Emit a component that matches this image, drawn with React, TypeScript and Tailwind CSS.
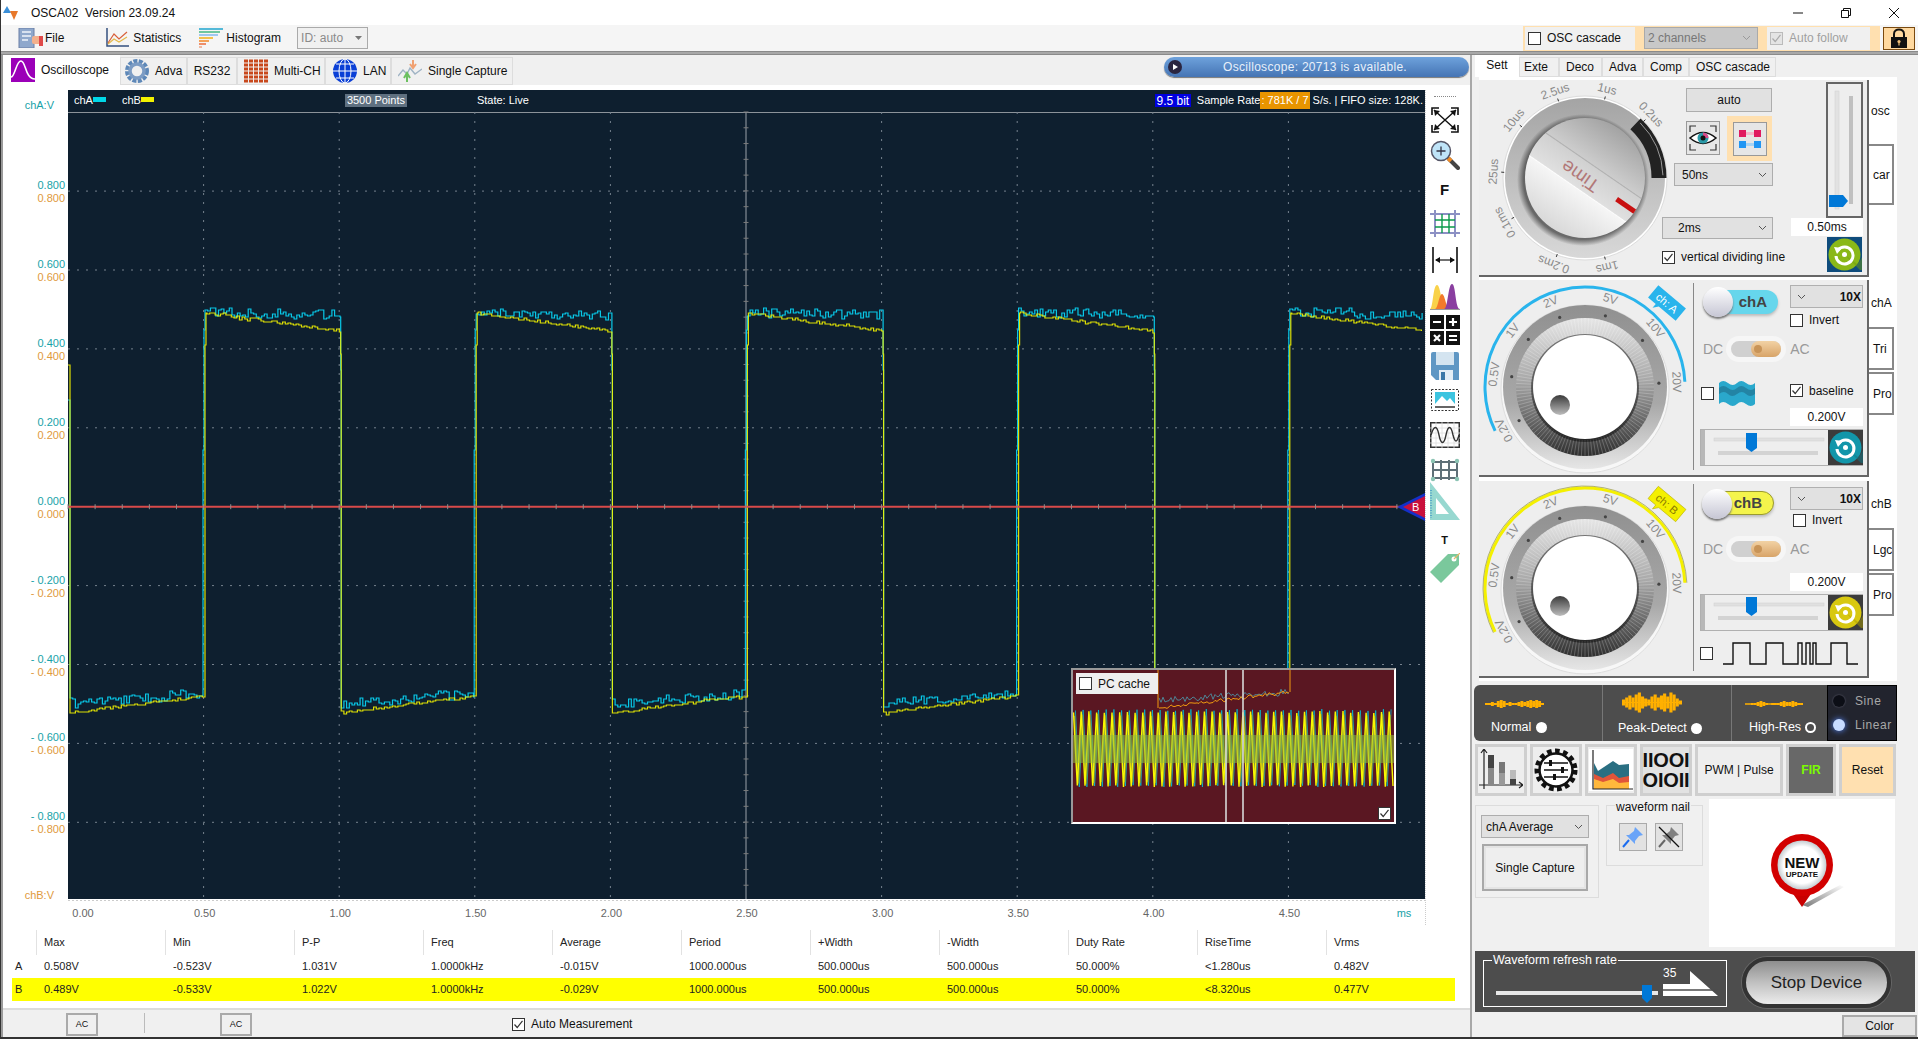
import type { ReactNode } from "react";

// plot geometry, in page pixels
const PLOT_L = 68;
const PLOT_R = 1424;
const PLOT_T = 112;
const PLOT_B = 899;
const ZERO_Y = 506.7;
const DIV_X = 135.6;
const DIV_Y = 78.9;

function rng(seed: number) {
  let a = seed;
  return () => {
    a |= 0;
    a = (a + 0x6d2b79f5) | 0;
    let t = Math.imul(a ^ (a >>> 15), 1 | a);
    t = (t + Math.imul(t ^ (t >>> 7), 61 | t)) ^ t;
    return ((t ^ (t >>> 14)) >>> 0) / 4294967296;
  };
}

type TraceOpt = { seed: number; lowS: number; lowE: number; highS: number; highE: number; noise: number; start: number; edge: number; mid1: number; mid2: number };

// staircase trace: the scope holds each sample until the next one
function trace(o: TraceOpt) {
  const r = rng(o.seed);
  const pts: string[] = [`${PLOT_L},${o.start}`];
  const period = 271.2;
  const step = 2.7;
  const n = () => Math.round((r() - 0.5) * 2 * o.noise);
  let lastY = o.start;
  const hold = (x: number, y: number) => {
    pts.push(`${x.toFixed(1)},${lastY} ${x.toFixed(1)},${y}`);
    lastY = y;
  };
  for (let k = 0; k < 5; k++) {
    const fall = PLOT_L + period * k + 1;
    const rise = fall + 135.6 + o.edge;
    const next = fall + period;
    for (let x = fall + 1; x < rise; x += step) {
      const f = (x - fall) / (rise - fall);
      hold(x, Math.round(o.lowS + (o.lowE - o.lowS) * f) + n());
    }
    hold(rise, o.mid1);
    hold(rise + 1, o.mid1 < 400 ? o.highS : 330);
    for (let x = rise + 2; x < next && x < PLOT_R; x += step) {
      const f = (x - rise) / (next - rise);
      hold(x, Math.round(o.highS + (o.highE - o.highS) * f) + n());
    }
    if (next < PLOT_R) hold(next + 0.5, o.mid2);
  }
  return pts.join(" ");
}

const CYAN_PTS = trace({ seed: 7, lowS: 703, lowE: 694, highS: 312, highE: 315, noise: 5, start: 400, edge: -1.6, mid1: 450, mid2: 370 });
const YELLOW_PTS = trace({ seed: 21, lowS: 713, lowE: 696, highS: 313, highE: 331, noise: 1.6, start: 365, edge: 0.4, mid1: 345, mid2: 354 });

function miniTrace(seed: number, y0: number, y1: number, noise: number) {
  const r = rng(seed);
  const pts: string[] = [];
  for (let x = 1159; x < 1290; x += 2) {
    const f = (x - 1159) / 131;
    pts.push(`${x},${(y0 + (y1 - y0) * f + (r() - 0.5) * noise).toFixed(1)}`);
  }
  return pts.join(" ");
}

function zigzag(y0: number, y1: number, off: number, seed: number) {
  const r = rng(seed);
  const pts: string[] = [];
  let up = true;
  for (let x = 1073 + off; x < 1394; x += 3.85) {
    pts.push(`${x.toFixed(1)},${up ? y0 + r() * 2 : y1 - r() * 2}`);
    up = !up;
  }
  return pts.join(" ");
}

function polar(cx: number, cy: number, r: number, deg: number) {
  const a = ((deg - 90) * Math.PI) / 180;
  return [cx + r * Math.cos(a), cy + r * Math.sin(a)];
}

function arc(cx: number, cy: number, r: number, from: number, to: number) {
  const [x0, y0] = polar(cx, cy, r, from);
  const [x1, y1] = polar(cx, cy, r, to);
  return `M${x0} ${y0} A${r} ${r} 0 ${to - from > 180 ? 1 : 0} 1 ${x1} ${y1}`;
}

function Check({ on, off, className = "" }: { on?: boolean; off?: boolean; className?: string }) {
  return (
    <span className={`flex h-[13px] w-[13px] shrink-0 items-center justify-center border ${off ? "border-[#bbb] bg-[#e4e4e4]" : "border-[#333] bg-white"} ${className}`}>
      {on && (
        <svg width="11" height="11" viewBox="0 0 11 11">
          <path d="M1.5 5.5 L4.2 8.5 L9.5 1.8" fill="none" stroke={off ? "#aaa" : "#333"} strokeWidth="1.2" />
        </svg>
      )}
    </span>
  );
}

function Chevron({ color = "#555" }: { color?: string }) {
  return (
    <svg width="9" height="6" viewBox="0 0 9 6" className="shrink-0">
      <path d="M1 1 L4.5 4.5 L8 1" fill="none" stroke={color} strokeWidth="1" />
    </svg>
  );
}

function TitleBar() {
  return (
    <div className="flex h-[25px] items-center bg-white">
      <svg width="16" height="16" viewBox="0 0 16 16" className="ml-[2px]">
        <path d="M0 8 L4 1 L8 8 Z" fill="#3a8fd8" />
        <path d="M7 6 H15 L11 15 Z" fill="#e8782a" />
      </svg>
      <span className="ml-[12px] whitespace-pre text-[#111]">OSCA02  Version 23.09.24</span>
      <div className="ml-auto flex items-center">
        <svg width="12" height="12" viewBox="0 0 12 12" className="mr-[36px]"><path d="M1 6 H11" stroke="#111" strokeWidth="1" /></svg>
        <svg width="12" height="12" viewBox="0 0 12 12" className="mr-[36px]"><path d="M1.5 3.5 H8.5 V10.5 H1.5 Z M3.5 3.5 V1.5 H10.5 V8.5 H8.5" fill="none" stroke="#111" strokeWidth="1" /></svg>
        <svg width="12" height="12" viewBox="0 0 12 12" className="mr-[18px]"><path d="M1 1 L11 11 M11 1 L1 11" stroke="#111" strokeWidth="1" /></svg>
      </div>
    </div>
  );
}

function MenuBar() {
  return (
    <div className="flex h-[26px] items-center bg-[#f5f5f5]">
      <svg width="26" height="20" viewBox="0 0 26 20" className="ml-[17px]">
        <rect x="1" y="0" width="15" height="20" fill="#8fa8cc" stroke="#6a7fa5" />
        <path d="M4 4 H13 M4 8 H13 M4 12 H10" stroke="#f0f4fa" strokeWidth="1.5" />
        <rect x="14" y="8" width="11" height="8" rx="2" fill="#f3b08c" />
        <rect x="21" y="8" width="4" height="10" fill="#e04a4a" />
      </svg>
      <span className="ml-px">File</span>
      <svg width="24" height="20" viewBox="0 0 24 20" className="ml-[41px]">
        <path d="M2 0 V18 H24" fill="none" stroke="#35507f" strokeWidth="1.5" />
        <path d="M3 15 L9 6 L14 11 L22 4" fill="none" stroke="#d8603a" strokeWidth="1.2" />
        <path d="M3 16 L9 11 L14 14 L22 9" fill="none" stroke="#e3b84a" strokeWidth="1.2" />
      </svg>
      <span className="ml-[4px]">Statistics</span>
      <svg width="24" height="20" viewBox="0 0 24 20" className="ml-[18px]">
        <rect x="0" y="0" width="24" height="2" fill="#54b9d8" />
        <rect x="0" y="3" width="21" height="2" fill="#6fc7a0" />
        <rect x="0" y="6" width="19" height="2" fill="#9fc8f0" />
        <rect x="0" y="9" width="14" height="2" fill="#f2c14e" />
        <rect x="0" y="12" width="10" height="2" fill="#f4a259" />
        <rect x="0" y="15" width="7" height="2" fill="#ee8f6b" />
        <rect x="0" y="18" width="3" height="2" fill="#f0b8a0" />
      </svg>
      <span className="ml-[3px]">Histogram</span>
      <div className="ml-[16px] flex h-[22px] w-[71px] items-center justify-between border border-[#aaa] bg-[#f0f0f0] pl-[3px] pr-[5px] text-[#8a8a8a]">
        <span>ID: auto</span>
        <svg width="7" height="4" viewBox="0 0 7 4"><path d="M0 0 H7 L3.5 4 Z" fill="#777" /></svg>
      </div>
      <div className="ml-auto flex h-[25px] w-[357px] items-center bg-[#ffe0b0] pl-[2px]">
        <div className="flex h-[23px] w-[110px] items-center bg-[#f0f0f0] pl-[3px]">
          <Check />
          <span className="ml-[6px]">OSC cascade</span>
        </div>
        <div className="ml-[9px] flex h-[22px] w-[114px] items-center justify-between border border-[#aaa] bg-[#c8c8c8] pl-[3px] pr-[6px] text-[#777]">
          <span>2 channels</span>
          <Chevron color="#999" />
        </div>
        <div className="ml-[9px] flex h-[23px] w-[103px] items-center bg-[#f0f0f0] pl-[3px] text-[#a0a0a0]">
          <Check on off />
          <span className="ml-[6px]">Auto follow</span>
        </div>
      </div>
      <div className="ml-[3px] mr-[3px] flex h-[23px] w-[32px] items-center justify-center border border-[#7a4a10] bg-[#ffd9a0]">
        <svg width="20" height="20" viewBox="0 0 20 20">
          <path d="M5 10 V6 C5 0 15 0 15 6 V10" fill="none" stroke="#111" strokeWidth="2" />
          <rect x="2" y="9" width="16" height="11" fill="#111" />
          <circle cx="10" cy="13.5" r="1.6" fill="#f4c27a" />
          <rect x="9.4" y="14" width="1.2" height="3.5" fill="#f4c27a" />
        </svg>
      </div>
    </div>
  );
}

function TabIcon({ children, w = 24 }: { children: ReactNode; w?: number }) {
  return (
    <svg width={w} height="24" viewBox={`0 0 ${w} 24`} className="shrink-0">
      {children}
    </svg>
  );
}

function ScopeTabs() {
  const tab = "mt-[2px] flex h-[28px] items-center border border-[#ddd] bg-[#f0f0f0]";
  return (
    <div className="flex h-[30px] items-start">
      <div className="flex h-[30px] w-[117px] items-center bg-white pl-[8px]">
        <TabIcon>
          <rect width="24" height="24" fill="#9b00b8" />
          <path d="M0 19 C4 19 5 3 10 3 C15 3 14 21 24 21" fill="none" stroke="#fff" strokeWidth="1.6" />
        </TabIcon>
        <span className="ml-[6px]">Oscilloscope</span>
      </div>
      <div className={`${tab} w-[67px] pl-[4px]`}>
        <TabIcon>
          <circle cx="12" cy="12" r="10" fill="none" stroke="#5e88b8" strokeWidth="4" strokeDasharray="4 1.4" />
          <circle cx="12" cy="12" r="7" fill="none" stroke="#7c9cc4" strokeWidth="3.5" />
        </TabIcon>
        <span className="ml-[6px]">Adva</span>
      </div>
      <div className={`${tab} w-[50px] justify-center`}>RS232</div>
      <div className={`${tab} w-[88px] pl-[6px]`}>
        <TabIcon>
          {Array.from({ length: 30 }, (_, i) => (
            <rect key={i} x={(i % 5) * 5} y={Math.floor(i / 5) * 4 + 0.5} width="4" height="3" fill="#c8481c" />
          ))}
        </TabIcon>
        <span className="ml-[6px]">Multi-CH</span>
      </div>
      <div className={`${tab} w-[66px] pl-[7px]`}>
        <TabIcon>
          <circle cx="12" cy="12" r="12" fill="#0a3fd6" />
          <path d="M0 12 H24 M12 0 V24 M3 5 H21 M3 19 H21" stroke="#fff" strokeWidth="1" />
          <ellipse cx="12" cy="12" rx="6" ry="12" fill="none" stroke="#fff" strokeWidth="1" />
        </TabIcon>
        <span className="ml-[6px]">LAN</span>
      </div>
      <div className={`${tab} w-[122px] pl-[6px]`}>
        <TabIcon>
          <path d="M0 17 L5 11 L9 15 L12 9 L17 15 L24 10" fill="none" stroke="#9fb3c4" strokeWidth="1.4" />
          <path d="M15 1 V8 M12 5 L15 9 L18 5" fill="none" stroke="#f0a070" strokeWidth="2" />
          <path d="M9 23 V16 M6 19 L9 14 L12 19" fill="none" stroke="#6cc060" strokeWidth="2" />
        </TabIcon>
        <span className="ml-[6px]">Single Capture</span>
      </div>
      <div className="ml-auto mr-[1px] mt-[2px] flex h-[20px] w-[305px] items-center rounded-full bg-linear-to-b from-[#6ea2dc] to-[#4574b4] pl-[4px] text-[#e8f0fa] shadow-[0_1px_1px_#777]">
        <span className="flex h-[14px] w-[14px] items-center justify-center rounded-full bg-[#2a2540]">
          <svg width="6" height="6" viewBox="0 0 6 6"><path d="M1 0 L6 3 L1 6 Z" fill="#fff" /></svg>
        </span>
        <span className="ml-[41px] tracking-[0.3px]">Oscilloscope: 20713 is available.</span>
      </div>
    </div>
  );
}

const Y_LABELS = ["0.800", "0.600", "0.400", "0.200", "0.000", "- 0.200", "- 0.400", "- 0.600", "- 0.800"];
const X_LABELS = ["0.00", "0.50", "1.00", "1.50", "2.00", "2.50", "3.00", "3.50", "4.00", "4.50"];

function PlotSvg() {
  const vLines = Array.from({ length: 9 }, (_, i) => PLOT_L + (i + 1) * DIV_X);
  const hLines = Array.from({ length: 9 }, (_, i) => ZERO_Y + (i - 4) * DIV_Y);
  const ticks = Array.from({ length: 50 }, (_, i) => PLOT_L + i * 27.12);
  const vTicks = Array.from({ length: 50 }, (_, i) => PLOT_T + i * (DIV_Y / 5));
  const midX = PLOT_L + 5 * DIV_X;
  return (
    <svg width="1422" height="835" viewBox="3 90 1422 835" className="block">
      <defs>
        <clipPath id="plotClip"><rect x={PLOT_L} y={PLOT_T} width={PLOT_R - PLOT_L} height={PLOT_B - PLOT_T} /></clipPath>
      </defs>
      <rect x={PLOT_L} y="90" width={PLOT_R + 1 - PLOT_L} height={PLOT_B - 90} fill="#0e1f2f" />
      <path d={`M${PLOT_L} ${PLOT_T + 0.5} H${PLOT_R + 1}`} stroke="#8c939a" />
      {hLines.filter((_, i) => i !== 4).map((y) => (
        <path key={y} d={`M${PLOT_L} ${y} H${PLOT_R}`} stroke="#76828e" strokeDasharray="2 7" />
      ))}
      {vLines.filter((_, i) => i !== 4).map((x) => (
        <path key={x} d={`M${x} ${PLOT_T} V${PLOT_B}`} stroke="#76828e" strokeDasharray="2 7" />
      ))}
      <path d={`M${midX} ${PLOT_T} V${PLOT_B}`} stroke="#9aa2aa" />
      {vTicks.map((y) => (
        <path key={y} d={`M${midX - 2.5} ${y} H${midX + 2.5}`} stroke="#7c7c7c" />
      ))}
      <g clipPath="url(#plotClip)">
        <polyline points={CYAN_PTS} fill="none" stroke="#08c8e8" strokeWidth="1.2" />
        <polyline points={YELLOW_PTS} fill="none" stroke="#f4f400" strokeWidth="1.2" opacity="0.9" />
      </g>
      <path d={`M${PLOT_L} ${ZERO_Y} H1410`} stroke="#d84a4a" strokeWidth="2" />
      {ticks.map((x) => (
        <path key={x} d={`M${x} ${ZERO_Y - 2.5} V${ZERO_Y + 2.5}`} stroke="#8d8d8d" />
      ))}
      <polygon points="1397,507 1425,493 1425,521" fill="#1430c8" />
      <polygon points="1403,507 1425,496 1425,518" fill="#c8103c" />
      <text x="1412" y="511" fontSize="11" fill="#fff">B</text>

      <text x="54" y="109" fontSize="11" fill="#17a2a8" textAnchor="end">chA:V</text>
      <text x="54" y="899" fontSize="11" fill="#e09a3c" textAnchor="end">chB:V</text>
      {Y_LABELS.map((t, i) => (
        <g key={t} fontSize="11" textAnchor="end">
          <text x="65" y={hLines[i] - 2} fill="#17a2a8">{t}</text>
          <text x="65" y={hLines[i] + 11} fill="#e09a3c">{t}</text>
        </g>
      ))}
      <path d={`M${PLOT_L} 900.5 H${PLOT_R + 1}`} stroke="#ccc" strokeDasharray="2 2" />
      {X_LABELS.map((t, i) => (
        <text key={t} x={i === 0 ? 83 : PLOT_L + i * DIV_X + 1} y="917" fontSize="11" fill="#666" textAnchor="middle">{t}</text>
      ))}
      <text x="1404" y="917" fontSize="11" fill="#17a2a8" textAnchor="middle">ms</text>
    </svg>
  );
}

function PlotHeader() {
  return (
    <div className="absolute left-[65px] top-0 flex h-[21px] w-[1357px] items-center text-[11px] text-white">
      <span className="ml-[6px]">chA</span>
      <span className="mb-[3px] h-[5px] w-[13px] bg-[#00d8e8]" />
      <span className="ml-[16px]">chB</span>
      <span className="mb-[3px] h-[5px] w-[13px] bg-[#f2f200]" />
      <span className="ml-[191px] flex h-[13px] w-[62px] items-center justify-center bg-[#5f7080]">3500 Points</span>
      <span className="ml-[70px]">State: Live</span>
      <span className="ml-auto flex h-[13px] w-[36px] items-center justify-center bg-[#0000e0] text-[12px]">9.5 bit</span>
      <span className="ml-[6px]">Sample Rate</span>
      <span className="bg-[#e89400] px-px">: 781K / 7</span>
      <span className="ml-[3px] mr-[2px] whitespace-pre">S/s. | FIFO size: 128K.</span>
    </div>
  );
}

function PcCache() {
  return (
    <div className="absolute left-[1068px] top-[578px] h-[156px] w-[325px] border-2 border-white border-l-[#999] border-t-[#999] bg-[#5a1722]">
      <svg width="321" height="152" viewBox="1073 670 321 152" className="absolute left-0 top-0">
        <polyline points={zigzag(709, 787, 2.4, 3)} fill="none" stroke="#00bcd4" strokeWidth="0.8" />
        <polyline points={zigzag(714, 784, 1.5, 4)} fill="none" stroke="#7c8a3e" strokeWidth="1.8" />
        <polyline points={zigzag(711, 787, 0.5, 5)} fill="none" stroke="#f8f800" strokeWidth="1.4" />
        <rect x="1073" y="735" width="321" height="28" fill="#93bb3c" opacity="0.55" />
        <polyline points={miniTrace(9, 700, 692, 7)} fill="none" stroke="#4f8394" strokeWidth="1" />
        <polyline points={miniTrace(11, 708, 692, 4)} fill="none" stroke="#f09a10" strokeWidth="1" />
        <path d="M1158 668 V708 M1290 670 V692" stroke="#f09a10" strokeWidth="1" />
        <path d="M1226 670 V822 M1243 670 V822" stroke="#d8d8d8" strokeWidth="1.6" />
      </svg>
      <div className="absolute left-[3px] top-[3px] flex h-[21px] w-[82px] items-center bg-[#eeeeee] pl-[3px]">
        <Check />
        <span className="ml-[6px]">PC cache</span>
      </div>
      <Check on className="absolute bottom-[2px] right-[3px]" />
    </div>
  );
}

function ToolStrip() {
  return (
    <div className="flex w-[45px] flex-col items-center border-l border-dotted border-[#ccc] pr-[7px]">
      <div className="mt-[6px] h-px w-[22px] border-t border-dotted border-[#888]" />
      <svg width="28" height="26" viewBox="0 0 28 26" className="mt-[10px]">
        <path d="M3 3 L25 23 M25 3 L3 23" stroke="#111" strokeWidth="1.4" />
        <path d="M1 8 V1 H8 M20 1 H27 V8 M1 18 V25 H8 M20 25 H27 V18" fill="none" stroke="#111" strokeWidth="1.6" />
        <path d="M3 3 L9 4 L4 9 Z M25 3 L19 4 L24 9 Z M3 23 L9 22 L4 17 Z M25 23 L19 22 L24 17 Z" fill="#111" />
      </svg>
      <svg width="30" height="30" viewBox="0 0 30 30" className="mt-[7px]">
        <path d="M19 19 L28 28" stroke="#444" strokeWidth="4" strokeLinecap="round" />
        <path d="M18 18 L21 21" stroke="#f08a24" strokeWidth="4" />
        <circle cx="11" cy="11" r="9.5" fill="#bfe4f8" stroke="#556" strokeWidth="1.5" />
        <path d="M6.5 11 H15.5 M11 6.5 V15.5" stroke="#334" strokeWidth="1.3" />
      </svg>
      <span className="mt-[13px] text-[15px] font-bold leading-[14px]">F</span>
      <svg width="30" height="27" viewBox="0 0 30 27" className="mt-[13px]">
        <path d="M0 4 H30 M0 23 H30 M5 0 V27 M25 0 V27" stroke="#8c90c4" strokeWidth="2" />
        <path d="M5 10 H25 M5 17 H25 M12 4 V23 M19 4 V23" stroke="#0a9a4a" strokeWidth="1.4" />
      </svg>
      <svg width="28" height="26" viewBox="0 0 28 26" className="mt-[10px]">
        <path d="M2 0 V26 M26 0 V26" stroke="#111" strokeWidth="1.6" />
        <path d="M5 13 H23" stroke="#111" strokeWidth="1.2" />
        <path d="M4 13 L9 10 V16 Z M24 13 L19 10 V16 Z" fill="#111" />
      </svg>
      <svg width="30" height="30" viewBox="0 0 30 30" className="mt-[7px]">
        <path d="M0 29 C3 29 3 5 7 5 C11 5 11 29 17 29 Z" fill="#f9d24a" />
        <path d="M5 29 C8 29 9 14 12 14 C15 14 16 29 20 29 Z" fill="#f27a2a" />
        <path d="M14 29 C18 29 18 4 22 4 C26 4 25 29 30 29 Z" fill="#8a3fa0" />
        <path d="M0 29.5 H30" stroke="#999" />
      </svg>
      <svg width="30" height="30" viewBox="0 0 30 30" className="mt-[5px]">
        <rect x="0" y="0" width="14" height="14" fill="#111" />
        <rect x="16" y="0" width="14" height="14" fill="#111" />
        <rect x="0" y="16" width="14" height="14" fill="#111" />
        <rect x="16" y="16" width="14" height="14" fill="#111" />
        <path d="M3 7 H11 M19 7 H27 M23 3 V11 M4 20 L10 26 M10 20 L4 26 M19 21 H27 M19 25 H27" stroke="#fff" strokeWidth="2.2" />
      </svg>
      <svg width="28" height="28" viewBox="0 0 28 28" className="mt-[7px]">
        <path d="M2 0 H26 Q28 0 28 2 V28 H5 L0 23 V2 Q0 0 2 0 Z" fill="#5f97c4" />
        <rect x="5" y="0" width="18" height="13" fill="#d4e4f0" />
        <rect x="8" y="18" width="14" height="10" fill="#e4eef6" />
        <rect x="10" y="20" width="4" height="8" fill="#3c78a8" />
      </svg>
      <svg width="30" height="24" viewBox="0 0 30 24" className="mt-[8px]">
        <rect x="1.5" y="1.5" width="27" height="21" fill="#fff" stroke="#333" strokeWidth="1" strokeDasharray="2 1.5" />
        <rect x="5" y="4" width="20" height="12" fill="#3cc4e0" />
        <path d="M5 16 L12 8 L17 13 L20 10 L25 16 Z" fill="#fff" />
        <rect x="5" y="18" width="20" height="2" fill="#666" />
      </svg>
      <svg width="30" height="26" viewBox="0 0 30 26" className="mt-[10px]">
        <rect x="0.75" y="0.75" width="28.5" height="24.5" fill="#fff" stroke="#333" strokeWidth="1.5" />
        <path d="M0 6 H30 M0 11 H30 M0 16 H30 M0 21 H30 M6 0 V26 M12 0 V26 M18 0 V26 M24 0 V26" stroke="#ddd" strokeWidth="0.8" />
        <path d="M1 13 C4 3 7 3 9 13 C11 23 14 23 16 13 C18 3 21 3 23 13 C25 21 27 21 29 13" fill="none" stroke="#333" strokeWidth="1.4" />
      </svg>
      <svg width="30" height="24" viewBox="0 0 30 24" className="mt-[10px]">
        <path d="M2 4 H28 M2 12 H28 M2 20 H28 M3 2 V22 M11 2 V22 M19 2 V22 M27 2 V22" stroke="#5f7078" strokeWidth="2" />
        <g fill="#8cc4b4">
          <circle cx="3" cy="3" r="2.2" /><circle cx="27" cy="3" r="2.2" /><circle cx="3" cy="21" r="2.2" /><circle cx="27" cy="21" r="2.2" />
        </g>
      </svg>
      <svg width="30" height="38" viewBox="0 0 30 38">
        <path fillRule="evenodd" d="M0 0 L30 38 H0 Z M6 16 V32 H19 Z" fill="#97d8d0" />
        <path d="M1 8 V36" stroke="#58a8c8" strokeWidth="2" strokeDasharray="1 1.5" />
      </svg>
      <span className="mt-[13px] text-[11px] font-bold leading-[14px]">T</span>
      <svg width="30" height="30" viewBox="0 0 30 30" className="mt-[6px]">
        <path d="M0 19 L18 1 H29 V12 L11 30 Z" fill="#7ac89c" />
        <circle cx="24" cy="6" r="2.5" fill="#fff" />
        <path d="M24 6 L30 0" stroke="#e8b86a" strokeWidth="1.2" />
      </svg>
    </div>
  );
}

const MEASURE_HEAD = ["Max", "Min", "P-P", "Freq", "Average", "Period", "+Width", "-Width", "Duty Rate", "RiseTime", "Vrms"];
const ROW_A = ["0.508V", "-0.523V", "1.031V", "1.0000kHz", "-0.015V", "1000.000us", "500.000us", "500.000us", "50.000%", "<1.280us", "0.482V"];
const ROW_B = ["0.489V", "-0.533V", "1.022V", "1.0000kHz", "-0.029V", "1000.000us", "500.000us", "500.000us", "50.000%", "<8.320us", "0.477V"];

function MeasureTable() {
  return (
    <div className="ml-[9px] mt-[5px] grid w-[1444px] grid-cols-[24px_repeat(11,129px)] text-[11px] text-[#222]">
      <div className="h-[25px]" />
      {MEASURE_HEAD.map((h) => (
        <div key={h} className="flex h-[25px] items-center border-l border-[#e2e2e2] pl-[7px] last:border-r">{h}</div>
      ))}
      <div className="flex h-[23px] items-center pl-[3px]">A</div>
      {ROW_A.map((v, i) => (
        <div key={i} className="flex h-[23px] items-center pl-[8px]">{v}</div>
      ))}
      <div className="flex h-[23px] items-center bg-[#ffff00] pl-[3px]">B</div>
      {ROW_B.map((v, i) => (
        <div key={i} className="flex h-[23px] items-center bg-[#ffff00] pl-[8px]">{v}</div>
      ))}
    </div>
  );
}

function LeftColumn() {
  return (
    <div className="flex w-[1469px] flex-col border-l-2 border-[#9a9a9a]">
      <ScopeTabs />
      <div className="h-[925px] border-b-2 border-[#dcdcdc] bg-white pt-[5px]">
        <div className="flex">
          <div className="relative h-[835px] w-[1422px]">
            <PlotSvg />
            <PlotHeader />
            <PcCache />
          </div>
          <ToolStrip />
        </div>
        <MeasureTable />
      </div>
      <div className="flex flex-1 items-start">
        <div className="ml-[63px] mt-[3px] flex h-[23px] w-[32px] items-center justify-center border-2 border-[#aaa] text-[9px]">AC</div>
        <div className="ml-[46px] mt-[3px] h-[20px] w-px bg-[#bbb]" />
        <div className="ml-[75px] mt-[3px] flex h-[23px] w-[32px] items-center justify-center border-2 border-[#aaa] text-[9px]">AC</div>
        <div className="ml-[260px] mt-[5px] flex items-center text-[12px]">
          <Check on />
          <span className="ml-[6px]">Auto Measurement</span>
        </div>
      </div>
    </div>
  );
}

const TIME_LABELS: [string, number][] = [
  ["1us", 14], ["2.5us", -19], ["0.2us", 46], ["10us", -51], ["25us", -86], ["0.1ms", -119], ["0.2ms", -160], ["1ms", 166],
];

function TimeKnob() {
  const cx = 106;
  const cy = 98;
  return (
    <svg width="183" height="195" viewBox="0 0 183 195" className="shrink-0 overflow-visible">
      <defs>
        <linearGradient id="tkRing" x1="0" y1="0" x2="0" y2="1"><stop offset="0" stopColor="#a4a4a4" /><stop offset="1" stopColor="#d8d8d8" /></linearGradient>
        <linearGradient id="tkUp" x1="0" y1="0" x2="0" y2="1"><stop offset="0" stopColor="#9a9a9a" /><stop offset="1" stopColor="#cdcdcd" /></linearGradient>
        <linearGradient id="tkBand" x1="0" y1="0" x2="0" y2="1"><stop offset="0" stopColor="#d0d0d0" /><stop offset="1" stopColor="#e0e0e0" /></linearGradient>
        <linearGradient id="tkLow" x1="0" y1="0" x2="0" y2="1"><stop offset="0" stopColor="#f6f6f6" /><stop offset="1" stopColor="#d2d2d2" /></linearGradient>
        <radialGradient id="tkShade"><stop offset="0.9" stopColor="#333" /><stop offset="1" stopColor="#333" stopOpacity="0" /></radialGradient>
        <clipPath id="tkDisc"><circle r="60" /></clipPath>
      </defs>
      <circle cx={cx} cy={cy} r="82" fill="#fff" stroke="#dcdcdc" />
      <circle cx={cx} cy={cy} r="80" fill="url(#tkRing)" />
      <path d={arc(cx, cy, 74, 43, 90)} fill="none" stroke="#222" strokeWidth="15" />
      <path d={arc(cx, cy, 78, 45, 88)} fill="none" stroke="#999" strokeWidth="1" />
      <circle cx={cx - 2} cy={cy + 2} r="66" fill="url(#tkShade)" opacity="0.65" />
      <g transform={`translate(${cx} ${cy}) rotate(34.5)`} clipPath="url(#tkDisc)">
        <rect x="-70" y="-70" width="140" height="55" fill="url(#tkUp)" />
        <rect x="-70" y="-15" width="140" height="28" fill="url(#tkBand)" />
        <rect x="-70" y="13" width="140" height="57" fill="url(#tkLow)" />
        <path d="M-70 -15 H70" stroke="#b4b4b4" />
        <path d="M-70 13 H70" stroke="#fff" />
        <rect x="38" y="-3" width="26" height="5" fill="#c81010" />
      </g>
      <text x={cx - 4} y={cy - 3} fontSize="19" fill="#b27878" textAnchor="middle" transform={`rotate(215 ${cx - 4} ${cy - 3})`} dominantBaseline="middle">Time</text>
      {TIME_LABELS.map(([t, a]) => {
        const [x, y] = polar(cx, cy, 91, a);
        const [x0, y0] = polar(cx, cy, 81, a);
        const [x1, y1] = polar(cx, cy, 84, a);
        return (
          <g key={t}>
            <path d={`M${x0} ${y0} L${x1} ${y1}`} stroke="#333" />
            <text x={x} y={y} fontSize="12" fill="#8a8a8a" textAnchor="middle" dominantBaseline="middle" transform={`rotate(${a} ${x} ${y})`}>{t}</text>
          </g>
        );
      })}
    </svg>
  );
}

function ResetBtn({ bg, ring, arrow, inner }: { bg: string; ring: string; arrow: string; inner: string }) {
  return (
    <svg width="35" height="35" viewBox="0 0 35 35" className="block shrink-0">
      <rect width="35" height="35" fill={bg} />
      <circle cx="17.5" cy="17.5" r="16" fill={ring} />
      <path d="M17.5 17.5 L33 33 H35 V20 A16 16 0 0 1 30 27 Z" fill={inner} opacity="0.5" />
      <path d="M11 13 A8.5 8.5 0 1 1 9 19" fill="none" stroke={arrow} strokeWidth="3" />
      <path d="M7 10 L15 11 L10 17 Z" fill={arrow} />
      <circle cx="17.5" cy="17.5" r="2.5" fill={arrow} />
    </svg>
  );
}

function TimePanel() {
  return (
    <div className="flex h-[197px] w-[390px] border-b-2 border-r-2 border-[#666] bg-[#eeeeee]">
      <TimeKnob />
      <div className="flex w-[129px] flex-col">
        <div className="ml-[24px] mt-[8px] flex h-[24px] w-[86px] items-center justify-center border border-[#adadad] bg-[#e1e1e1]">auto</div>
        <div className="mt-[4px] flex items-start">
          <div className="ml-[24px] mt-[5px] flex h-[34px] w-[34px] items-center justify-center border border-[#999] bg-[#e6e6e6]">
            <svg width="28" height="26" viewBox="0 0 28 26">
              <path d="M1 7 V1 H7 M21 1 H27 V7 M1 19 V25 H7 M21 25 H27 V19" fill="none" stroke="#333" strokeWidth="1.2" />
              <path d="M1 13 Q14 2 27 13 Q14 24 1 13 Z" fill="#fff" stroke="#111" strokeWidth="1.6" />
              <circle cx="14" cy="13" r="5.5" fill="#2a9aa8" />
              <path d="M14 7.5 A5.5 5.5 0 0 1 19.5 13 H14 Z" fill="#d84a8a" />
              <circle cx="14" cy="13" r="2.5" fill="#111" />
            </svg>
          </div>
          <div className="ml-[7px] flex h-[45px] w-[45px] items-center justify-center bg-[#ffe0b0]">
            <div className="flex h-[34px] w-[34px] items-center justify-center border border-[#999] bg-[#e6e6e6]">
              <svg width="22" height="22" viewBox="0 0 22 22">
                <rect x="6" y="4" width="10" height="3" fill="#f4b8cc" />
                <rect x="6" y="15" width="10" height="3" fill="#a8d4f4" />
                <rect x="0" y="2" width="7" height="7" fill="#e01a60" />
                <rect x="15" y="2" width="7" height="7" fill="#e01a60" />
                <rect x="0" y="13" width="7" height="7" fill="#2196f3" />
                <rect x="15" y="13" width="7" height="7" fill="#2196f3" />
              </svg>
            </div>
          </div>
        </div>
        <div className="ml-[12px] mt-[2px] flex h-[23px] w-[99px] items-center justify-between border border-[#adadad] bg-[#e1e1e1] pl-[7px] pr-[5px]">
          <span>50ns</span><Chevron />
        </div>
        <div className="mt-[31px] flex h-[22px] w-[111px] items-center justify-between border border-[#adadad] bg-[#e1e1e1] pl-[15px] pr-[5px]">
          <span>2ms</span><Chevron />
        </div>
        <div className="mt-[9px] flex items-center whitespace-nowrap">
          <Check on />
          <span className="ml-[6px]">vertical dividing line</span>
        </div>
      </div>
      <div className="flex flex-1 flex-col items-end pr-[4px]">
        <svg width="37" height="136" viewBox="0 0 37 136" className="mt-[2px] block shrink-0">
          <rect x="1" y="1" width="35" height="134" fill="#eeeeee" stroke="#666" strokeWidth="2" />
          <rect x="9" y="9" width="4" height="118" fill="#e2e2e2" stroke="#d0d0d0" strokeWidth="0.5" />
          <rect x="23" y="14" width="4" height="108" fill="#c0c0c0" />
          <polygon points="3,113 17,113 22,119 17,125 3,125" fill="#0078d7" />
        </svg>
        <div className="flex h-[18px] w-[72px] shrink-0 items-center justify-center bg-white">0.50ms</div>
        <div className="mr-px mt-px">
          <ResetBtn bg="#0f4c7c" ring="#8ab818" arrow="#fff" inner="#6e9a10" />
        </div>
      </div>
    </div>
  );
}

const V_LABELS: [string, number][] = [["5V", 16], ["2V", -22], ["1V", -52], ["0.5V", -82], ["0.2V", -118], ["10V", 50], ["20V", 87]];
const KNOB_DOTS = [-20, 16, 51, 87, -117, -82, -50];

function VoltKnob({ ch }: { ch: "A" | "B" }) {
  const cx = 106;
  const cy = 107;
  const color = ch === "A" ? "#29b4ec" : "#f4f000";
  const ridges = Array.from({ length: 120 }, (_, i) => i * 3);
  return (
    <svg width="214" height="195" viewBox="0 0 214 195" className="shrink-0">
      <defs>
        <linearGradient id={`vkRidge${ch}`} x1="0" y1="0" x2="0" y2="1"><stop offset="0" stopColor="#e6e6e6" /><stop offset="0.45" stopColor="#a8a8a8" /><stop offset="1" stopColor="#2e2e2e" /></linearGradient>
        <linearGradient id={`vkOuter${ch}`} x1="0" y1="0" x2="0" y2="1"><stop offset="0" stopColor="#909090" /><stop offset="0.6" stopColor="#a8a8a8" /><stop offset="1" stopColor="#e6e6e6" /></linearGradient>
        <linearGradient id={`vkDot${ch}`} x1="0" y1="0" x2="0" y2="1"><stop offset="0" stopColor="#3a3a3a" /><stop offset="1" stopColor="#bdbdbd" /></linearGradient>
      </defs>
      <circle cx={cx} cy={cy + 2} r="84" fill="#f7f7f7" stroke="#dedede" />
      <circle cx={cx} cy={cy} r="82" fill={`url(#vkOuter${ch})`} />
      <circle cx={cx} cy={cy} r="69" fill={`url(#vkRidge${ch})`} />
      {ridges.map((a) => {
        const [x0, y0] = polar(cx, cy, 53, a);
        const [x1, y1] = polar(cx, cy, 69, a);
        return <path key={a} d={`M${x0} ${y0} L${x1} ${y1}`} stroke="#fff" strokeOpacity="0.22" strokeWidth="1" />;
      })}
      <circle cx={cx} cy={cy + 1} r="54" fill="#000" opacity="0.45" />
      <circle cx={cx} cy={cy} r="52" fill="#fff" />
      <circle cx={cx - 25} cy={cy + 18} r="10" fill={`url(#vkDot${ch})`} />
      {KNOB_DOTS.map((a) => {
        const [x, y] = polar(cx, cy, 74, a);
        return <circle key={a} cx={x} cy={y} r="1.6" fill="#444" />;
      })}
      <path d={arc(cx, cy, 100, -116, 87)} fill="none" stroke={color} strokeWidth="3" />
      {ch === "B" && <path d={arc(cx, cy, 102, -116, 87)} fill="none" stroke="#8a8a20" strokeWidth="0.6" />}
      {V_LABELS.map(([t, a]) => {
        const [x, y] = polar(cx, cy, 91, a);
        return <text key={t} x={x} y={y} fontSize="12" fill="#8a8a8a" textAnchor="middle" dominantBaseline="middle" transform={`rotate(${a} ${x} ${y})`}>{t}</text>;
      })}
      <g transform="translate(188 23) rotate(40)">
        <polygon points="-18,-8 18,-8 18,8 -4,8 -8,13 -8,8 -18,8" fill={color} stroke={ch === "B" ? "#b8b000" : "none"} strokeWidth="0.6" />
        <text x="0" y="4" fontSize="11" textAnchor="middle" fill={ch === "A" ? "#fff" : "#8a7a00"}>{`ch: ${ch}`}</text>
      </g>
    </svg>
  );
}

function ChanToggle({ ch }: { ch: "A" | "B" }) {
  return (
    <div className={`relative flex h-[24px] items-center justify-end rounded-full ${ch === "A" ? "ml-[19px] w-[65px] bg-[#66d6ec] pr-[11px]" : "ml-[17px] w-[63px] border border-[#9a9a30] bg-[#f4f44c] pr-[11px]"} text-[15px] font-bold text-[#444] shadow-[0_2px_3px_#bbb]`}>
      {`ch${ch}`}
      <span className="absolute -left-[10px] -top-[3px] h-[30px] w-[30px] rounded-full bg-linear-to-b from-white to-[#c6c6d4] shadow-[0_2px_2px_#777]" />
    </div>
  );
}

function DcAc() {
  return (
    <div className="ml-[9px] flex items-center text-[14px] text-[#999]">
      <span>DC</span>
      <span className="ml-[3px] flex h-[26px] w-[60px] items-center justify-center rounded-full bg-[#f6f6f6]">
        <span className="relative block h-[16px] w-[50px] rounded-full bg-[#d0d0d0]">
          <span className="absolute right-0 top-0 block h-[16px] w-[30px] rounded-full bg-linear-to-b from-[#f2d2a4] to-[#d8a468]">
            <span className="absolute left-[3px] top-[4px] block h-[8px] w-[8px] rounded-full bg-[#c89458]" />
          </span>
        </span>
      </span>
      <span className="ml-[4px]">AC</span>
    </div>
  );
}

function ChannelSlider({ ch, thumbUp }: { ch: "A" | "B"; thumbUp: number }) {
  return (
    <div className="ml-[6px] flex h-[37px] w-[163px] border border-[#b0b0b0] bg-[#eeeeee]">
      <svg width="127" height="35" viewBox="0 0 127 35" className="block shrink-0">
        <rect x="0" y="0" width="4" height="35" fill="#b8b8b8" />
        <rect x="13" y="8" width="110" height="3" fill="#e0e0e0" stroke="#d0d0d0" strokeWidth="0.5" />
        {Array.from({ length: 50 }, (_, i) => (
          <path key={i} d={`M${18 + i * 2} 21 V25`} stroke="#aaa" strokeWidth="0.8" />
        ))}
        <polygon points={`45,${thumbUp} 56,${thumbUp} 56,${thumbUp + 15} 50.5,${thumbUp + 19} 45,${thumbUp + 15}`} fill="#0078d7" />
      </svg>
      <ResetBtn
        bg="#3c3c3c"
        ring={ch === "A" ? "#1296aa" : "#d8c810"}
        arrow="#fff"
        inner={ch === "A" ? "#0d7a8a" : "#a89a00"}
      />
    </div>
  );
}

function ValueBox() {
  return <div className="ml-[96px] flex h-[18px] w-[73px] shrink-0 items-center justify-center bg-white">0.200V</div>;
}

function X10() {
  return (
    <div className="flex h-[23px] w-[73px] items-center justify-between border border-[#b0b0b0] bg-[#e1e1e1] pl-[6px] pr-[1px] font-bold">
      <Chevron />
      <span>10X</span>
    </div>
  );
}

function ChannelPanel({ ch }: { ch: "A" | "B" }) {
  return (
    <div className="flex h-[197px] w-[390px] border-b-2 border-r-2 border-[#666] bg-[#eeeeee]">
      <VoltKnob ch={ch} />
      <div className="mt-[3px] h-[187px] w-px shrink-0 bg-[#888]" />
      <div className="flex flex-1 flex-col">
        <div className={`flex items-start ${ch === "A" ? "mt-[5px]" : "mt-[6px]"}`}>
          <div className={`w-[96px] ${ch === "A" ? "mt-[5px]" : "mt-[4px]"}`}><ChanToggle ch={ch} /></div>
          <div className="flex flex-col">
            <X10 />
            <div className={`flex items-center ${ch === "B" ? "ml-[3px] mt-[1px]" : "mt-[3px]"}`}>
              <Check />
              <span className="ml-[6px]">Invert</span>
            </div>
          </div>
        </div>
        <div className="mt-[7px]"><DcAc /></div>
        {ch === "A" ? (
          <>
            <div className="mt-[18px] flex h-[27px] items-center">
              <Check className="ml-[7px]" />
              <svg width="36" height="27" viewBox="0 0 36 27" className="ml-[5px]">
                <rect width="36" height="27" fill="#2aa8cc" />
                <path d="M0 3 Q4 -1 9 3 T18 3 T27 3 T36 3 V0 H0 Z" fill="#eeeeee" />
                <path d="M0 8 Q4 4 9 8 T18 8 T27 8 T36 8 V14 Q31 18 27 14 T18 14 T9 14 T0 14 Z" fill="#2384a4" />
                <path d="M0 24 Q4 20 9 24 T18 24 T27 24 T36 24 V27 H0 Z" fill="#eeeeee" />
              </svg>
              <div className="mb-[6px] ml-[35px] flex items-center">
                <Check on />
                <span className="ml-[6px]">baseline</span>
              </div>
            </div>
            <div className="mt-[1px]"><ValueBox /></div>
            <div className="mt-[3px]"><ChannelSlider ch="A" thumbUp={3} /></div>
          </>
        ) : (
          <>
            <div className="mt-[11px]"><ValueBox /></div>
            <div className="mt-[3px]"><ChannelSlider ch="B" thumbUp={2} /></div>
            <div className="mt-[11px] flex h-[23px] items-center">
              <Check className="ml-[6px]" />
              <svg width="135" height="23" viewBox="0 0 135 23" className="ml-[10px]">
                <path d="M0 22 H10 V1 H27 V22 H43 V1 H60 V22 H75 V1 H79 V22 H83 V1 H87 V22 H90 V1 H93 V22 H108 V1 H124 V22 H135" fill="none" stroke="#111" strokeWidth="1.4" />
              </svg>
            </div>
          </>
        )}
      </div>
    </div>
  );
}

function SideTabs({ items, first = "h-[47px]", tabH = "h-[43px]" }: { items: string[]; first?: string; tabH?: string }) {
  return (
    <div className="flex w-[28px] flex-col gap-[2px] overflow-hidden">
      <div className={`flex items-center pl-[2px] ${first}`}>{items[0]}</div>
      {items.slice(1).map((t) => (
        <div key={t} className={`flex w-[25px] shrink-0 items-center overflow-hidden whitespace-nowrap border-2 border-l-0 border-[#888] pl-[4px] ${tabH}`}>
          {t}
        </div>
      ))}
    </div>
  );
}

function Blob({ w, h, bars, className = "" }: { w: number; h: number; bars: number[]; className?: string }) {
  const step = w / bars.length;
  return (
    <svg width={w} height={h} viewBox={`0 0 ${w} ${h}`} className={`block ${className}`}>
      <path d={`M0 ${h / 2} H${w}`} stroke="#ffb000" strokeWidth="1" />
      {bars.map((b, i) => (
        <path key={i} d={`M${i * step + step / 2} ${h / 2 - b} V${h / 2 + b}`} stroke="#ffb000" strokeWidth={step} />
      ))}
    </svg>
  );
}

function ModeStrip() {
  return (
    <div className="ml-[2px] mt-[4px] flex h-[56px] w-[423px] overflow-hidden rounded-l-[6px] bg-[#4d4d4d] text-white">
      <div className="flex w-[129px] flex-col border-r border-[#777] pl-[11px] pt-[14px]">
        <Blob w={59} h={10} bars={[1, 1, 2, 1, 3, 4, 3, 1, 2, 1, 1, 2, 3, 2, 3, 4, 3, 4, 3, 1]} />
        <div className="mt-[9px] flex items-center text-[12.5px]">
          <span className="ml-[6px]">Normal</span>
          <span className="ml-[5px] h-[11px] w-[11px] rounded-full bg-white" />
        </div>
      </div>
      <div className="flex w-[129px] flex-col border-r border-[#777] pl-[15px] pt-[7px]">
        <Blob w={60} h={21} bars={[3, 5, 7, 5, 8, 10, 6, 4, 3, 6, 8, 5, 7, 9, 6, 10, 8, 4, 2]} className="ml-[4px]" />
        <div className="mt-[6px] flex items-center text-[12.5px]">
          <span>Peak-Detect</span>
          <span className="ml-[4px] h-[11px] w-[11px] rounded-full bg-white" />
        </div>
      </div>
      <div className="flex w-[95px] flex-col pl-[17px] pt-[15px]">
        <Blob w={58} h={8} bars={[0.5, 0.5, 1, 1, 2, 3, 2, 1, 0.5, 1, 1, 1, 2, 3, 2, 2, 3, 2, 1, 1]} className="-ml-[4px]" />
        <div className="mt-[10px] flex items-center text-[12.5px]">
          <span>High-Res</span>
          <span className="ml-[4px] h-[11px] w-[11px] rounded-full border-2 border-white" />
        </div>
      </div>
      <div className="flex w-[70px] flex-col justify-center gap-[10px] border border-black bg-[#22242e] pl-[5px] text-[#a8a8a8]">
        <div className="flex h-[14px] items-center tracking-[0.6px]">
          <span className="h-[12px] w-[12px] rounded-full bg-[#0c0e16] shadow-[0_0_2px_#667]" />
          <span className="ml-[10px]">Sine</span>
        </div>
        <div className="flex h-[14px] items-center tracking-[0.6px]">
          <span className="h-[12px] w-[12px] rounded-full bg-[#c8dcff] shadow-[0_0_6px_#5a8cff]" />
          <span className="ml-[10px]">Linear</span>
        </div>
      </div>
    </div>
  );
}

function FuncButtons() {
  const b = "flex h-[52px] shrink-0 items-center justify-center border-[3px] border-[#cfcfcf]";
  return (
    <div className="ml-[3px] mt-[3px] flex">
      <div className={`${b} w-[52px] bg-[#eeeeee]`}>
        <svg width="44" height="42" viewBox="0 0 44 42">
          <path d="M5 0 V40 M0 36 H44 M2 4 L5 0 L8 4 M40 33 L44 36 L40 39" fill="none" stroke="#222" strokeWidth="1.2" />
          <rect x="9" y="6" width="6" height="30" fill="#888" /><rect x="9" y="6" width="6" height="13" fill="#444" />
          <rect x="20" y="13" width="6" height="23" fill="#999" /><rect x="20" y="13" width="6" height="11" fill="#777" />
          <rect x="31" y="21" width="6" height="15" fill="#bbb" /><rect x="31" y="30" width="6" height="6" fill="#444" />
        </svg>
      </div>
      <div className={`${b} ml-[3px] w-[52px] bg-[#eeeeee]`}>
        <svg width="44" height="44" viewBox="0 0 44 44">
          <circle cx="22" cy="22" r="19" fill="none" stroke="#111" strokeWidth="5" strokeDasharray="4.6 3.4" />
          <circle cx="22" cy="22" r="16.5" fill="#fff" stroke="#111" strokeWidth="2.5" />
          <path d="M10 15 H34 M10 22 H34 M10 29 H34" stroke="#111" strokeWidth="1.6" />
          <rect x="15" y="12" width="3" height="6" fill="#111" /><rect x="27" y="19" width="3" height="6" fill="#111" /><rect x="19" y="26" width="3" height="6" fill="#111" />
        </svg>
      </div>
      <div className={`${b} ml-[3px] w-[52px] bg-[#eeeeee]`}>
        <svg width="44" height="42" viewBox="0 0 44 42">
          <rect width="44" height="42" fill="#fff" />
          <path d="M5 40 V14 L9 22 L15 18 L24 12 L30 16 L40 15 V40 Z" fill="#2a6f82" />
          <path d="M5 40 V25 L14 29 L24 24 L30 29 L40 27 V40 Z" fill="#e0553a" />
          <path d="M5 40 V30 L14 33 L24 30 L30 34 L40 33 V40 Z" fill="#ffb83c" />
          <path d="M4 1 V40 H44" fill="none" stroke="#222" strokeWidth="1.2" />
        </svg>
      </div>
      <div className={`${b} ml-[3px] w-[52px] flex-col bg-[#e2e2e2] text-[20px] font-bold leading-[20px] tracking-[-0.2px]`}>
        <span>IIOOI</span>
        <span>OIOII</span>
      </div>
      <div className={`${b} ml-[3px] w-[88px] bg-[#eeeeee]`}>PWM | Pulse</div>
      <div className={`${b} ml-[3px] w-[50px] bg-[#686868] font-bold text-[#7cfc00]`}>FIR</div>
      <div className={`${b} ml-[3px] w-[57px] bg-[#ffe0b0]`}>Reset</div>
    </div>
  );
}

function NewUpdate() {
  return (
    <svg width="80" height="80" viewBox="0 0 80 80">
      <defs>
        <linearGradient id="nuShadow" x1="0" y1="1" x2="1" y2="0"><stop offset="0" stopColor="#777" /><stop offset="1" stopColor="#fff" /></linearGradient>
        <radialGradient id="nuIn"><stop offset="0.75" stopColor="#fff" /><stop offset="1" stopColor="#c4ccd0" /></radialGradient>
      </defs>
      <polygon points="32,72 70,52 74,54 38,74" fill="url(#nuShadow)" />
      <path d="M17 52 L32 74 L47 52 Z" fill="#c80000" />
      <circle cx="32" cy="32" r="31" fill="#d20000" />
      <circle cx="32" cy="32" r="24.5" fill="url(#nuIn)" />
      <text x="32" y="35" fontSize="15" fontWeight="bold" textAnchor="middle" fill="#111">NEW</text>
      <text x="32" y="44" fontSize="8" fontWeight="bold" textAnchor="middle" fill="#111">UPDATE</text>
    </svg>
  );
}

function NailButton({ kind }: { kind: "pin" | "off" }) {
  const c = kind === "pin" ? "#6aa4f8" : "#808080";
  return (
    <div className="flex h-[28px] w-[28px] items-center justify-center border border-[#aaa] bg-[#e2e2e2]">
      <svg width="22" height="22" viewBox="0 0 22 22">
        <path d="M13 1 L21 9 L17 10 L13 15 L13 18 L4 9 L7 9 L12 5 Z" fill={c} />
        <path d="M7 14 L1 21" stroke={kind === "pin" ? "#1a6cf0" : "#666"} strokeWidth="2" />
        {kind === "off" && <path d="M1 1 L21 21" stroke="#111" strokeWidth="1.2" />}
      </svg>
    </div>
  );
}

function Groups() {
  return (
    <div className="ml-[3px] mt-[3px] flex h-[148px] items-start">
      <div className="mt-[6px] flex h-[93px] w-[124px] shrink-0 flex-col border border-[#dcdcdc] pl-[5px] pt-[9px]">
        <div className="flex h-[23px] w-[108px] items-center justify-between border border-[#adadad] bg-[#e1e1e1] pl-[4px] pr-[5px]">
          <span>chA Average</span><Chevron />
        </div>
        <div className="ml-px mt-[6px] flex h-[47px] w-[106px] items-center justify-center border-2 border-[#a8a8a8] bg-[#eeeeee] shadow-[inset_0_0_0_2px_#e4e4e4]">Single Capture</div>
      </div>
      <div className="relative ml-[7px] mt-[6px] flex h-[61px] w-[97px] shrink-0 gap-[8px] border border-[#dcdcdc] pl-[12px] pt-[17px]">
        <span className="absolute left-[8px] top-[-8px] bg-[#f0f0f0] px-[1px]">waveform nail</span>
        <NailButton kind="pin" />
        <NailButton kind="off" />
      </div>
      <div className="ml-[6px] flex h-[148px] w-[186px] shrink-0 items-center justify-center bg-white pl-[16px]">
        <NewUpdate />
      </div>
    </div>
  );
}

function RefreshBar() {
  return (
    <div className="ml-[3px] mt-[4px] flex h-[61px] w-[440px] items-start bg-[#4d4d4d] text-white">
      <div className="relative ml-[8px] mt-[9px] h-[47px] w-[244px] shrink-0 border border-white">
        <span className="absolute left-[8px] top-[-9px] bg-[#4d4d4d] px-px text-[12.5px] leading-[16px]">Waveform refresh rate</span>
        <svg width="242" height="45" viewBox="0 0 242 45" className="block">
          <rect x="12" y="30" width="162" height="4" fill="#e8e8e8" />
          <polygon points="158,24 168,24 168,37 163,42 158,37" fill="#0078d7" />
          <text x="179" y="16" fontSize="12" fill="#fff" textAnchor="start">35</text>
          <path d="M179 23 H206 V10 L234 35 H179 Z" fill="#fff" />
          <path d="M179 29 H234" stroke="#4d4d4d" strokeWidth="1.5" />
        </svg>
      </div>
      <div className="ml-[15px] mt-[6px] flex h-[51px] w-[149px] items-center justify-center rounded-full border-[4px] border-[#333333] bg-linear-to-b from-[#8e8e8e] via-[#c0c0c0] to-[#ececec] text-[17px] text-[#222] shadow-[0_0_0_1px_#666]">
        Stop Device
      </div>
    </div>
  );
}

function RightColumn() {
  return (
    <div className="flex w-[448px] flex-col border-l-2 border-[#a8a8a8]">
      <div className="flex h-[22px] pl-[3px]">
        <div className="flex h-[22px] w-[44px] items-center justify-center bg-white pb-[3px]">Sett</div>
        {([["Exte", "w-[40px] pl-[4px]"], ["Deco", "w-[43px] pl-[6px]"], ["Adva", "w-[41px] pl-[6px]"], ["Comp", "w-[46px] pl-[6px]"], ["OSC cascade", "w-[87px] pl-[6px]"]] as const).map(([t, w]) => (
          <div key={t} className={`mt-[2px] flex h-[20px] items-center border border-[#ddd] ${w}`}>{t}</div>
        ))}
      </div>
      <div className="ml-[7px] flex h-[604px] w-[418px] flex-col gap-[3px] bg-white pt-[3px]">
        <div className="flex">
          <TimePanel />
          <SideTabs items={["osc", "car"]} first="h-[62px]" tabH="h-[61px]" />
        </div>
        <div className="flex">
          <ChannelPanel ch="A" />
          <SideTabs items={["chA", "Tri", "Pro"]} first="h-[45px]" />
        </div>
        <div className="mt-px flex">
          <ChannelPanel ch="B" />
          <SideTabs items={["chB", "Lgc", "Pro"]} first="h-[45px]" />
        </div>
      </div>
      <ModeStrip />
      <FuncButtons />
      <Groups />
      <RefreshBar />
      <div className="mt-[3px] flex flex-1 justify-end pr-[1px]">
        <div className="flex h-[22px] w-[75px] items-center justify-center border-2 border-[#aaa] bg-[#e4e4e4]">Color</div>
      </div>
    </div>
  );
}

export default function App() {
  return (
    <div className="flex h-[1039px] w-[1918px] flex-col overflow-hidden border-b-2 border-l border-[#333] bg-[#f0f0f0] font-['Liberation_Sans',sans-serif] text-[12px] text-[#111]">
      <TitleBar />
      <MenuBar />
      <div className="h-[4px] shrink-0 border-y border-[#8a8a8a] bg-[#a8a8a8]" />
      <div className="flex flex-1">
        <LeftColumn />
        <RightColumn />
      </div>
    </div>
  );
}
